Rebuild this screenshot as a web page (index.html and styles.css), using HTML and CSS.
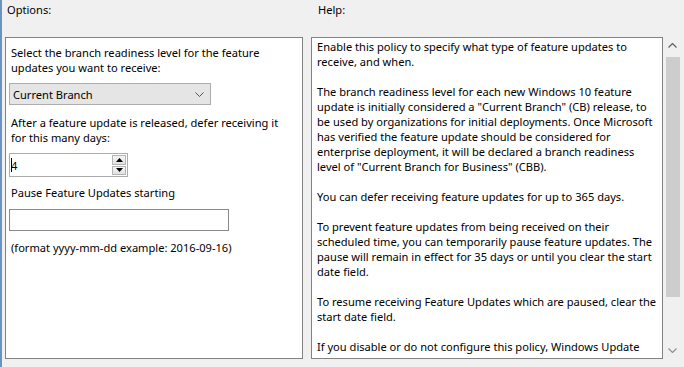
FILE: index.html
```html
<!DOCTYPE html>
<html>
<head>
<meta charset="utf-8">
<link rel="stylesheet" href="styles.css">
</head>
<body>
<div class="frame">
  <div class="headers">
    <div class="hdr hdr-left">Options:</div>
    <div class="hdr hdr-right">Help:</div>
  </div>
  <div class="panes">
    <div class="pane options">
      <p class="label">Select the branch readiness level for the feature<br>updates you want to receive:</p>
      <div class="combo">
        <span class="combo-text">Current Branch</span>
        <svg class="combo-arrow" width="9" height="5" viewBox="0 0 9 5"><path d="M0.5 0.5 L4.5 4.5 L8.5 0.5" fill="none" stroke="#555" stroke-width="1"/></svg>
      </div>
      <p class="label label-gap">After a feature update is released, defer receiving it<br>for this many days:</p>
      <div class="spin">
        <span class="spin-value"><span class="caret"></span>4</span>
        <div class="spin-buttons">
          <div class="spin-btn"><svg width="7" height="4" viewBox="0 0 7 4"><path d="M3.5 0 L7 4 L0 4 Z" fill="#000"/></svg></div>
          <div class="spin-btn"><svg width="7" height="4" viewBox="0 0 7 4"><path d="M0 0 L7 0 L3.5 4 Z" fill="#000"/></svg></div>
        </div>
      </div>
      <p class="label label-gap2">Pause Feature Updates starting</p>
      <div class="textbox"></div>
      <p class="label label-gap3">(format yyyy-mm-dd example: 2016-09-16)</p>
    </div>
    <div class="pane help">
      <p>Enable this policy to specify what type of feature updates to<br>receive, and when.</p>
      <p>The branch readiness level for each new Windows 10 feature<br>update is initially considered a "Current Branch" (CB) release, to<br>be used by organizations for initial deployments. Once Microsoft<br>has verified the feature update should be considered for<br>enterprise deployment, it will be declared a branch readiness<br>level of "Current Branch for Business" (CBB).</p>
      <p>You can defer receiving feature updates for up to 365 days.</p>
      <p>To prevent feature updates from being received on their<br>scheduled time, you can temporarily pause feature updates. The<br>pause will remain in effect for 35 days or until you clear the start<br>date field.</p>
      <p>To resume receiving Feature Updates which are paused, clear the<br>start date field.</p>
      <p class="last">If you disable or do not configure this policy, Windows Update</p>
    </div>
    <div class="scrollbar">
      <div class="sb-arrow"><svg width="9" height="5" viewBox="0 0 9 5"><path d="M0.5 4.5 L4.5 0.5 L8.5 4.5" fill="none" stroke="#606060" stroke-width="1.2"/></svg></div>
      <div class="sb-track"><div class="sb-thumb"></div></div>
      <div class="sb-arrow"><svg width="9" height="5" viewBox="0 0 9 5"><path d="M0.5 0.5 L4.5 4.5 L8.5 0.5" fill="none" stroke="#909090" stroke-width="1.2"/></svg></div>
    </div>
  </div>
</div>
</body>
</html>
```
FILE: styles.css
```css
html, body {
  margin: 0;
  padding: 0;
  background: #f0f0f0;
}
body {
  width: 684px;
  height: 367px;
  overflow: hidden;
  font-family: "Noto Sans", "Open Sans", sans-serif;
  font-size: 11.1px;
  line-height: 15px;
  color: #000;
}
.frame {
  height: 367px;
  border-left: 2px solid #6a93c4;
  box-sizing: border-box;
}
.headers {
  display: flex;
  height: 37px;
  padding-top: 2px;
  box-sizing: border-box;
}
.hdr-left {
  width: 306px;
  padding-left: 5px;
}
.hdr-right {
  padding-left: 5px;
}
.panes {
  display: flex;
  height: 322px;
  padding-left: 3px;
}
.pane {
  flex-shrink: 0;
  border: 1px solid #828282;
  background: #fff;
  box-sizing: border-box;
  height: 322px;
  overflow: hidden;
}
.options {
  width: 298px;
  padding: 7px 3px 0;
}
.help {
  width: 352px;
  margin-left: 8px;
  padding: 1px 5px 0;
}
p {
  margin: 0;
}
.help p {
  margin-bottom: 15px;
  white-space: nowrap;
}
.help p.last {
  margin-bottom: 0;
}
.label {
  padding-left: 2px;
  white-space: nowrap;
}
.combo {
  margin-top: 8px;
  width: 202px;
  height: 22px;
  box-sizing: border-box;
  background: #e5e5e5;
  border: 1px solid #adadad;
  display: flex;
  align-items: center;
  justify-content: space-between;
  padding: 0 6px 0 3px;
}
.label-gap {
  margin-top: 10px;
}
.spin {
  margin-top: 8px;
  width: 119px;
  height: 24px;
  box-sizing: border-box;
  border: 1px solid #acacac;
  background: #fff;
  display: flex;
  justify-content: space-between;
  align-items: stretch;
  padding: 1px 1px 1px 0;
}
.spin-value {
  display: flex;
  align-items: center;
  padding-left: 1px;
}
.caret {
  display: inline-block;
  width: 1px;
  height: 14px;
  background: #000;
  margin-right: -1px;
}
.spin-buttons {
  display: flex;
  flex-direction: column;
  gap: 1px;
  width: 14px;
}
.spin-btn {
  flex: 1;
  border: 1px solid #b5b5b5;
  background: linear-gradient(#f4f4f4, #e2e2e2);
  display: flex;
  align-items: center;
  justify-content: center;
}
.label-gap2 {
  margin-top: 8px;
}
.textbox {
  margin-top: 9px;
  width: 220px;
  height: 22px;
  box-sizing: border-box;
  border: 1px solid #8a8a8a;
  background: #fff;
}
.label-gap3 {
  margin-top: 9px;
}
.scrollbar {
  flex-shrink: 0;
  width: 15px;
  margin-left: 2px;
  height: 322px;
  display: flex;
  flex-direction: column;
  background: #f0f0f0;
}
.sb-arrow {
  flex-shrink: 0;
  height: 17px;
  display: flex;
  align-items: center;
  justify-content: center;
}
.sb-track {
  flex: 1 1 auto;
  display: flex;
  flex-direction: column;
  padding: 3px 0 0 1px;
  min-height: 0;
}
.sb-thumb {
  flex: 0 0 240px;
  width: 14px;
  background: #cdcdcd;
}
```
